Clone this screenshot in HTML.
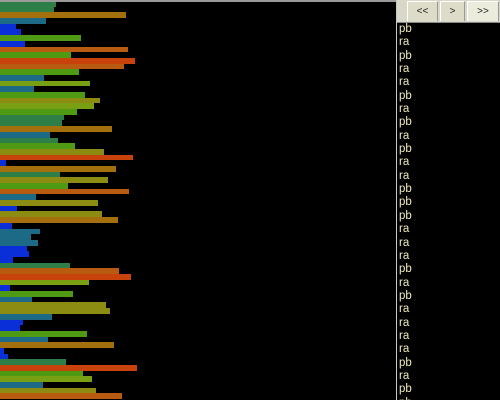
<!DOCTYPE html>
<html><head><style>
*{margin:0;padding:0;box-sizing:border-box}
html,body{width:500px;height:400px;overflow:hidden}
body{background:#000;position:relative;font-family:"Liberation Sans",sans-serif}
#top{position:absolute;left:0;top:0;width:500px;height:2px;background:#9a9a9a}
#bars{position:absolute;left:0;top:1px;width:396px}
#bars div{height:5.7px}
#panel{position:absolute;left:396px;top:0;width:104px;height:400px;border-left:1px solid #c8c8c8;background:#000;overflow:hidden}
#btns{height:23px;background:#d8d8c8;border-bottom:1px solid #888;position:relative}
.b{position:absolute;top:1px;height:20px;background:#dcdcc8;border-left:1px solid #fff;border-top:1px solid #fff;border-right:1px solid #999;font-size:10px;color:#222;text-align:center;line-height:20px}
#list{padding-left:2px;color:#f0eab8;font-size:11.5px;line-height:13.35px;padding-top:0px}
</style></head><body>
<div id="bars"></div>
<div id="top"></div>
<div id="panel">
<div id="btns">
<div class="b" style="left:10px;width:31px">&lt;&lt;</div>
<div class="b" style="left:43px;width:25px">&gt;</div>
<div class="b" style="left:70px;width:32px;background:#ececdc">&gt;&gt;</div>
</div>
<div id="list">pb<br>ra<br>pb<br>ra<br>ra<br>pb<br>ra<br>pb<br>ra<br>pb<br>ra<br>ra<br>pb<br>pb<br>pb<br>ra<br>ra<br>ra<br>pb<br>ra<br>pb<br>ra<br>ra<br>ra<br>ra<br>pb<br>ra<br>pb<br>pb</div>
</div>
<script>
var C={B:"#0a2ed8",T:"#1d6a86",G:"#2e7e48",g:"#4e9a12",Y:"#78a012",O:"#8c8c12",R:"#a4700e",o:"#b85a10",X:"#c8420c"};
var d=[[56,"G"],[54,"G"],[126,"R"],[46,"T"],[16,"B"],[21,"B"],[81,"g"],[25,"B"],[128,"o"],[71,"g"],[135,"X"],[124,"o"],[79,"g"],[44,"T"],[90,"Y"],[34,"T"],[85,"g"],[100,"O"],[94,"Y"],[77,"g"],[64,"G"],[62,"G"],[112,"R"],[50,"T"],[58,"G"],[75,"g"],[104,"O"],[133,"X"],[6,"B"],[116,"R"],[60,"G"],[108,"O"],[68,"g"],[129,"o"],[36,"T"],
[98,"O"],[17,"B"],[102,"O"],[118,"R"],[12,"B"],[40,"T"],[31,"T"],[38,"T"],[27,"B"],[29,"B"],[13,"B"],[70,"G"],[119,"o"],[131,"X"],[89,"Y"],[10,"B"],[73,"g"],[32,"T"],[106,"O"],[110,"O"],[52,"T"],[23,"B"],[20,"B"],[87,"g"],[48,"T"],[114,"R"],[4,"B"],[8,"B"],[66,"G"],[137,"X"],[83,"g"],[92,"Y"],[43,"T"],[96,"O"],[122,"o"]];
var h="";d.forEach(function(e){h+='<div style="width:'+e[0]+'px;background:'+C[e[1]]+'"></div>'});
document.getElementById("bars").innerHTML=h;
</script>
</body></html>
